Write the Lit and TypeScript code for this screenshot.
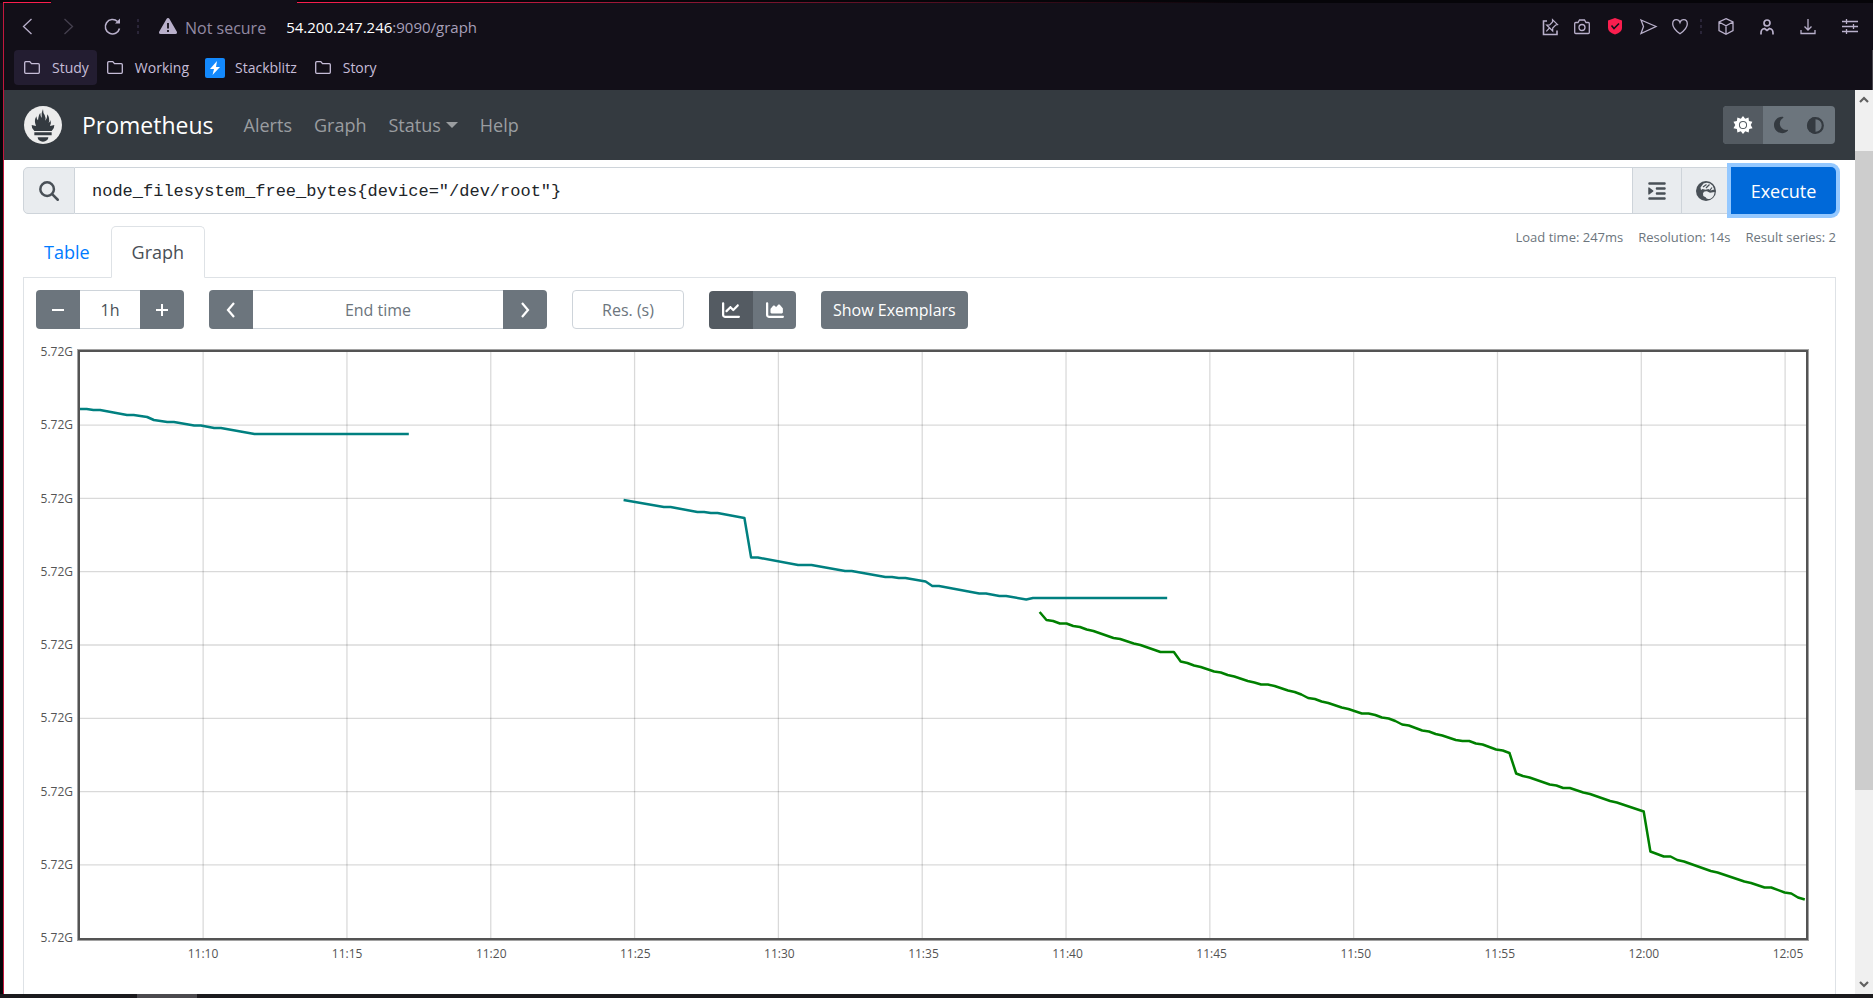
import { LitElement, html, css, svg } from "lit";
import { customElement, property, state } from "lit/decorators.js";

type Point = [number, number];

interface Series {
  color: string;
  points: Point[];
}

const PLOT_WIDTH = 1727;
const PLOT_HEIGHT = 586;
const SAMPLE_STEP = 6.715;

// Each point is [sample index, distance below the top of the plot].
const SERIES: Series[] = [
  {
    color: "#008080",
    points: [
      [0, 57], [1, 57], [2, 58], [3, 58], [7, 63], [8, 63], [10, 65], [11, 68], [13, 70], [14, 70],
      [17, 73.5], [18, 73.5], [20, 76], [21, 76], [26, 82], [49, 82],
    ],
  },
  {
    color: "#008080",
    points: [
      [81, 148], [87, 155], [88, 155], [92, 160], [93, 160], [94, 161], [95, 161], [99, 166],
      [100, 205.5], [101, 205.5], [107, 213], [109, 213], [114, 219], [115, 219], [120, 225],
      [121, 225], [122, 226], [123, 226], [126, 229.5], [127, 234], [128, 234], [134, 241.5],
      [135, 241.5], [137, 244], [138, 244], [141, 247.5], [142, 246], [162, 246],
    ],
  },
  {
    color: "#008000",
    points: [
      [143, 260], [144, 268], [145, 269], [146, 271.5], [147, 271.5], [148, 274], [149, 275],
      [150, 277.5], [151, 279], [154, 286], [155, 287], [157, 291.5], [158, 293], [161, 300],
      [163, 300], [164, 309.5], [165, 311], [166, 313.5], [167, 315], [169, 319.5], [170, 320.5],
      [171, 323], [172, 324.5], [174, 329], [175, 330.5], [176, 332.5], [177, 332.5], [178, 334],
      [180, 338.5], [181, 340], [182, 342.5], [183, 346], [184, 347], [185, 349.5], [186, 351],
      [188, 355.5], [189, 357], [191, 361.5], [192, 361.5], [193, 363], [194, 365.5], [195, 366.5],
      [196, 369], [197, 372.5], [198, 373.5], [200, 378.5], [201, 379.5], [202, 382], [203, 383.5],
      [205, 388], [206, 389], [207, 389], [208, 391.5], [209, 392.5], [211, 397.5], [212, 398.5],
      [213, 401], [214, 421.5], [215, 424], [216, 425.5], [219, 432.5], [220, 433.5], [221, 436],
      [222, 436], [224, 440.5], [225, 442], [228, 449], [229, 450.5], [233, 459.5], [234, 499.5],
      [236, 504.5], [237, 504.5], [238, 508], [239, 509.5], [243, 519], [244, 520.5], [248, 529.5],
      [249, 531], [251, 535.5], [252, 535.5], [254, 540.5], [255, 541.5], [256, 545.5], [257, 547.5],
    ],
  },
];

const Y_LABELS = Array.from({ length: 9 }, () => "5.72G");
const X_LABELS = [
  "11:10", "11:15", "11:20", "11:25", "11:30", "11:35",
  "11:40", "11:45", "11:50", "11:55", "12:00", "12:05",
];

const ICONS = {
  back: svg`<path d="M9.500 1 1.500 8.500 9.500 16" />`,
  forward: svg`<path d="M1.500 1 9.500 8.500 1.500 16" />`,
  reload: svg`<path d="M15.500 10.500A7.200 7.200 0 1 1 13.500 3.500" /><path d="M11 5.500H16V.5z" fill="currentColor" stroke="none" />`,
  folder: svg`<path d="M.7 1.700v9.600q0 1 1 1h12.600q1 0 1-1V3.700q0-1-1-1H7.500L5.800.7H1.700q-1 0-1 1z" />`,
  pinTab: svg`<path d="M5 2H1.500v13.500H15V11.500" stroke-width="1.600" /><path d="m10.500.7 5 5-1.800.3-3 3v3L4.700 6h3l2.800-3zM7.500 9 4.300 12.300" stroke-width="1.200" />`,
  camera: svg`<path d="M1.700 3.500H4L5.500 1h5L12 3.500h2.300q1 0 1 1v9q0 1-1 1H1.700q-1 0-1-1v-9q0-1 1-1z" /><circle cx="8" cy="8.500" r="3" />`,
  shield: svg`<path d="M7 0 14 2.500V10q0 4-7 6.500Q0 14 0 10V2.500z" fill="#fa1e4e" stroke="none" /><path d="m3.500 7.500 2.500 3 5-5" stroke="#14101a" stroke-width="1.600" />`,
  send: svg`<path d="M1 1 16 7.500 1 14.500 3.500 7.500z" />`,
  heart: svg`<path d="M8 14.800Q.7 9.500.7 5 .7.700 4.300.700 7 .7 8 3.500 9 .7 11.700.700 15.300.700 15.300 5 15.300 9.500 8 14.800z" />`,
  cube: svg`<path d="M8 .7 15 4v8.500L8 16.300 1 12.500V4zM1 4l7 3.700L15 4M8 7.700v8.600" />`,
  person: svg`<circle cx="7" cy="4" r="3" stroke-width="1.700" /><path d="M1 15.500V14q0-4 3.500-4.500L7 11.500l2.500-2Q13 10 13 14v1.500" stroke-width="1.700" />`,
  download: svg`<path d="M8 0v11M4.500 7.500 8 11l3.500-3.500M1 11v3.500h14V11" />`,
  sliders: svg`<path d="M0 2.500h16M0 7.500h16M0 12.500h16M4.500 0v5M11.500 5v5M4.500 10v5" />`,
  warning: svg`<path d="M9 0q1 0 1.500 1L18 14q.5 2-1.500 2h-15Q-.5 16 0 14L7.500 1Q8 0 9 0z" fill="currentColor" stroke="none" /><path d="M9 5v5.500M9 12v2" stroke="#14101a" stroke-width="1.800" />`,
  bolt: svg`<rect width="20" height="20" rx="2" fill="#1389fd" stroke="none" /><path d="m12 3-7 8h4l-1.500 6L15 9h-4z" fill="#fff" stroke="none" />`,
  logo: svg`<circle cx="57" cy="57" r="57" fill="#ececec" stroke="none" /><path d="M57 107c-9 0-16-6-16-13h32c0 7-7 13-16 13zM31 88v-9h52v9zM31 75q-9-8-8-18l13 3Q29 45 37 31q1 9 5 12 2-18 7-22 0 10 4 15-2-16 4-27 0 12 5 18 4 8 2 17 6-7 6-19 9 12 4 26 5-4 5-9 4 9-1 18l13-3q1 9-8 18z" fill="#343a40" stroke="none" />`,
  sun: svg`<path d="m12 2 2.400 3 3.700-1.300.4 3.900 3.800.7L20.500 12l2 3.500-3.700.8-.6 4-3.700-1.500L12 22l-2.400-3-3.800 1.300-.5-3.900-3.800-.8L3.500 12l-2-3.600 3.800-.8.500-3.900L9.600 5z" fill="currentColor" stroke="none" /><circle cx="12" cy="12" r="4.500" fill="#545b62" stroke="none" /><circle cx="12" cy="12" r="3.400" fill="currentColor" stroke="none" />`,
  moon: svg`<path d="M223.500 32C100 32 0 132.300 0 256S100 480 223.500 480c60.600 0 115.500-24.200 155.800-63.400c5-4.900 6.300-12.500 3.100-18.700s-10.100-9.700-17-8.500c-9.800 1.700-19.800 2.600-30.100 2.600c-96.900 0-175.500-78.800-175.500-176c0-65.800 36-123.100 89.300-153.300c6.100-3.500 9.200-10.500 7.700-17.300s-7.300-11.900-14.300-12.500c-6.300-.5-12.600-.8-19-.8z" fill="currentColor" stroke="none" />`,
  half: svg`<circle cx="8.500" cy="8.500" r="7.300" stroke-width="2.200" /><path d="M8.500 0a8.500 8.500 0 0 0 0 17z" fill="currentColor" stroke="none" />`,
  search: svg`<circle cx="208" cy="208" r="174" stroke-width="64" /><path d="m343 343 137 137" stroke-width="64" stroke-linecap="round" />`,
  indent: svg`<path d="M0 64C0 46.300 14.300 32 32 32H416c17.700 0 32 14.300 32 32s-14.300 32-32 32H32C14.300 96 0 81.700 0 64zM192 192c0-17.700 14.300-32 32-32H416c17.700 0 32 14.300 32 32s-14.300 32-32 32H224c-17.700 0-32-14.300-32-32zm32 96H416c17.700 0 32 14.300 32 32s-14.300 32-32 32H224c-17.700 0-32-14.300-32-32s14.300-32 32-32zM0 448c0-17.700 14.300-32 32-32H416c17.700 0 32 14.300 32 32s-14.300 32-32 32H32c-17.700 0-32-14.300-32-32zM127.800 268.600L25.800 347.900C15.300 356.100 0 348.600 0 335.300V176.700c0-13.300 15.300-20.800 25.800-12.600l101.900 79.300c8.200 6.400 8.200 18.800 0 25.200z" fill="currentColor" stroke="none" />`,
  globe: svg`<circle cx="10" cy="10" r="10" fill="currentColor" stroke="none" /><path d="M7.500 2.500Q13 .5 16.500 4.500L18.300 8.500 14.500 9.500 12.500 8 9.500 8.800 6.500 8 5 9 4.500 6.500zM7 12.500Q7.500 9.800 11 10.300L14 11.800 18.500 11Q18.500 15.500 14.500 17.700 10.500 19 9.700 16.300L7.300 15z" fill="#e9ecef" stroke="none" /><path d="M7 6 10.500 3.500M10 7l3.500-3.500M13 10.500 16 6.500" stroke-width="1.200" />`,
  minus: svg`<path d="M1 7h12" />`,
  plus: svg`<path d="M1 7h12M7 1v12" />`,
  left: svg`<path d="M8 1 2 8l6 7" />`,
  right: svg`<path d="m2 1 6 7-6 7" />`,
  line: svg`<path d="M64 64c0-17.700-14.300-32-32-32S0 46.300 0 64V400c0 44.200 35.800 80 80 80H480c17.700 0 32-14.300 32-32s-14.300-32-32-32H80c-8.800 0-16-7.200-16-16V64zm406.600 86.600c12.500-12.500 12.500-32.800 0-45.300s-32.800-12.500-45.300 0L320 210.700l-57.400-57.400c-12.500-12.500-32.800-12.500-45.300 0l-112 112c-12.500 12.500-12.500 32.800 0 45.300s32.800 12.500 45.300 0L240 221.300l57.400 57.400c12.500 12.500 32.800 12.500 45.300 0l128-128z" fill="currentColor" stroke="none" />`,
  area: svg`<path d="M64 64c0-17.700-14.300-32-32-32S0 46.300 0 64V400c0 44.200 35.800 80 80 80H480c17.700 0 32-14.300 32-32s-14.300-32-32-32H80c-8.800 0-16-7.200-16-16V64zM128 320V236c0-7.600 2.700-15 7.700-20.800l65.800-76.800c12.100-14.200 33.700-15 46.900-1.800l21 21c10 10 26.400 9.200 35.400-1.600l39.200-47c12.600-15.100 35.700-15.400 48.700-.6L472.100 199c5.100 5.800 7.900 13.300 7.900 21.100V320c0 17.700-14.300 32-32 32H160c-17.700 0-32-14.300-32-32z" fill="currentColor" stroke="none" />`,
  up: svg`<path d="m1 6 4-4 4 4" />`,
  down: svg`<path d="m1 1 4 4 4-4" />`,
};

type IconName = keyof typeof ICONS;

const icon = (name: IconName, width: number, height: number, box = `0 0 ${width} ${height}`, stroke = 1.3) => html`
  <svg width=${width} height=${height} viewBox=${box} fill="none" stroke="currentColor"
    stroke-width=${stroke} aria-hidden="true">${ICONS[name]}</svg>
`;

const shared = css`
  * {
    box-sizing: border-box;
  }
  svg {
    display: block;
    flex: none;
    overflow: visible;
  }
  button,
  input {
    font: inherit;
    margin: 0;
    border-radius: 0;
    min-width: 0;
  }
  button {
    display: flex;
    align-items: center;
    justify-content: center;
    border: 0;
    padding: 0;
    background: none;
    color: inherit;
  }
  a {
    color: inherit;
    text-decoration: none;
  }
`;

@customElement("browser-chrome")
class BrowserChrome extends LitElement {
  static styles = [
    shared,
    css`
      :host {
        display: block;
        background: #120f18;
        color: #b9b0cb;
      }
      .edge {
        display: flex;
        height: 3px;
        background: #060509;
      }
      .edge-start {
        width: 48px;
        border-top: 1px solid #fa1e4e;
        margin: 2px 0 0 3px;
      }
      .active-tab {
        width: 246px;
        background: #120f18;
      }
      .edge-end {
        flex: 1;
        height: 1px;
        margin-top: 2px;
        background: linear-gradient(90deg, #fa1e4e, #8a1633 25%, #060509 60%);
      }
      .body {
        margin-left: 3px;
        border-left: 1px solid #c2183d;
      }
      .address {
        display: flex;
        align-items: center;
        height: 47px;
        padding: 0 15px 0 18px;
        font-size: 16px;
      }
      .nav {
        display: flex;
        align-items: center;
        gap: 30px;
      }
      .dim {
        opacity: 0.3;
      }
      .dots {
        display: grid;
        gap: 3px;
      }
      .dots i {
        width: 2px;
        height: 3px;
        background: #2a2538;
      }
      .nav .dots {
        margin-left: -14px;
      }
      .security {
        display: flex;
        align-items: center;
        gap: 8px;
        margin-left: 20px;
        padding-top: 2px;
        color: #928aa3;
        font-size: 16px;
      }
      .security svg {
        color: #b9b0cb;
        margin-top: -3px;
      }
      .url {
        flex: 1;
        margin-left: 20px;
        padding: 0;
        color: #a79fb8;
        font-size: 15px;
      }
      .host {
        color: #fff;
      }
      .tools {
        display: flex;
        align-items: center;
        gap: 16px;
      }
      .tools .wide {
        margin-left: 10px;
      }
      .tools .dots {
        margin-left: -4px;
      }
      .bookmarks {
        display: flex;
        height: 40px;
        padding: 0 10px;
        border-right: 1px solid #4b4950;
        font-size: 14px;
        color: #c6bdd8;
      }
      .bookmark {
        display: flex;
        align-items: center;
        gap: 12px;
        height: 35px;
        padding: 0 8px 0 10px;
        border-radius: 4px;
      }
      .bookmark.site {
        gap: 10px;
        padding-left: 8px;
      }
      .current {
        background: #231d31;
      }
    `,
  ];

  render() {
    const dots = html`<span class="dots"><i></i><i></i><i></i></span>`;
    return html`
      <div class="edge">
        <div class="edge-start"></div>
        <div class="active-tab"></div>
        <div class="edge-end"></div>
      </div>
      <div class="body">
        <div class="address">
          <div class="nav">
            <button aria-label="Back">${icon("back", 11, 17)}</button>
            <button class="dim" aria-label="Forward">${icon("forward", 11, 17)}</button>
            <button aria-label="Reload">${icon("reload", 17, 17, "0 0 17 17", 1.6)}</button>
            ${dots}
          </div>
          <div class="security">${icon("warning", 18, 16)}<span>Not secure</span></div>
          <div class="url"><span class="host">54.200.247.246</span>:9090/graph</div>
          <div class="tools">
            <button aria-label="Pin">${icon("pinTab", 16, 16)}</button>
            <button aria-label="Snapshot">${icon("camera", 16, 15)}</button>
            <button aria-label="Tracker blocking">${icon("shield", 18, 17, "-2 0 18 17")}</button>
            <button aria-label="Send">${icon("send", 16, 15)}</button>
            <button aria-label="Favourite">${icon("heart", 16, 16)}</button>
            ${dots}
            <button aria-label="Extensions">${icon("cube", 16, 17)}</button>
            <button class="wide" aria-label="Profile">${icon("person", 14, 16)}</button>
            <button class="wide" aria-label="Downloads">${icon("download", 16, 15)}</button>
            <button class="wide" aria-label="Settings">${icon("sliders", 16, 15)}</button>
          </div>
        </div>
        <nav class="bookmarks">
          <a class="bookmark current" href="#">${icon("folder", 16, 13)}Study</a>
          <a class="bookmark" href="#">${icon("folder", 16, 13)}Working</a>
          <a class="bookmark site" href="#">${icon("bolt", 20, 20)}Stackblitz</a>
          <a class="bookmark" href="#">${icon("folder", 16, 13)}Story</a>
        </nav>
      </div>
    `;
  }
}

@customElement("prometheus-navbar")
class PrometheusNavbar extends LitElement {
  static styles = [
    shared,
    css`
      :host {
        display: flex;
        align-items: center;
        height: 70px;
        padding: 0 20px;
        background: #343a40;
        color: #9a9da0;
        font-size: 18px;
      }
      .brand {
        display: flex;
        align-items: center;
        gap: 20px;
        color: #fff;
        font-size: 23px;
      }
      .links {
        display: flex;
        flex: 1;
        gap: 22px;
        margin-left: 30px;
      }
      .menu {
        display: flex;
        align-items: center;
        gap: 5px;
      }
      .caret {
        border: 6px solid transparent;
        border-top-color: currentColor;
        border-bottom: 0;
      }
      .themes {
        display: flex;
        overflow: hidden;
        padding-right: 2px;
        border-radius: 4px;
        background: #6c757d;
        color: #343a40;
      }
      .themes button {
        width: 35px;
        height: 38px;
      }
      .themes .on {
        width: 40px;
        background: #545b62;
        color: #fff;
      }
    `,
  ];

  render() {
    return html`
      <a class="brand" href="#">${icon("logo", 38, 38, "0 0 114 114")}<span>Prometheus</span></a>
      <nav class="links">
        <a href="#">Alerts</a>
        <a href="#">Graph</a>
        <button class="menu">Status<span class="caret"></span></button>
        <a href="#">Help</a>
      </nav>
      <div class="themes">
        <button class="on" aria-label="Light theme">${icon("sun", 20, 20, "1 1 22 22")}</button>
        <button aria-label="Dark theme">${icon("moon", 14, 18, "0 20 384 472")}</button>
        <button aria-label="Automatic theme">${icon("half", 17, 17)}</button>
      </div>
    `;
  }
}

@customElement("time-chart")
class TimeChart extends LitElement {
  @property({ attribute: false }) series: Series[] = [];

  static styles = [
    shared,
    css`
      :host {
        display: grid;
        grid-template-columns: 37px 1fr;
        column-gap: 5px;
        color: #545454;
        font-size: 12px;
        line-height: 16px;
      }
      .y-axis {
        display: flex;
        flex-direction: column;
        justify-content: space-between;
        align-items: flex-end;
        margin: -6px 0;
      }
      .plot {
        border: 2px solid #545454;
        box-shadow: 0 0 0 1px #a2a2a2;
      }
      .plot svg {
        width: 100%;
        height: 586px;
        overflow: hidden;
      }
      .x-axis {
        grid-column: 2;
        display: grid;
        grid-template-columns: repeat(12, 1fr);
        margin: 6px -52px 0 53px;
        text-align: center;
      }
    `,
  ];

  render() {
    const path = (points: Point[]) =>
      "M" + points.map(([sample, y]) => `${(sample * SAMPLE_STEP).toFixed(1)} ${y}`).join("L");
    return html`
      <div class="y-axis">${Y_LABELS.map((label) => html`<span>${label}</span>`)}</div>
      <div class="plot">
        <svg viewBox="0 0 ${PLOT_WIDTH} ${PLOT_HEIGHT}" preserveAspectRatio="none" fill="none"
          role="img" aria-label="Free filesystem bytes over time">
          ${X_LABELS.map((_, i) => svg`<path d="M${123.2 + i * 143.9} 0V${PLOT_HEIGHT}"
            stroke="#000" stroke-opacity="0.15" stroke-width="1.300" vector-effect="non-scaling-stroke" />`)}
          ${Y_LABELS.slice(2).map((_, i) => svg`<path d="M0 ${73.1 + i * 73.3}H${PLOT_WIDTH}"
            stroke="#000" stroke-opacity="0.15" stroke-width="1.300" vector-effect="non-scaling-stroke" />`)}
          ${this.series.map((line) => svg`<path d=${path(line.points)} stroke=${line.color}
            stroke-width="2.500" stroke-linejoin="round" vector-effect="non-scaling-stroke" />`)}
        </svg>
      </div>
      <div class="x-axis">${X_LABELS.map((label) => html`<span>${label}</span>`)}</div>
    `;
  }
}

@customElement("graph-panel")
class GraphPanel extends LitElement {
  @state() private stacked = false;

  static styles = [
    shared,
    css`
      :host {
        display: block;
        padding: 7px 19px 0;
        color: #495057;
        font-size: 16px;
      }
      .query {
        display: flex;
        height: 47px;
      }
      .addon {
        width: 52px;
        border: 1px solid #ced4da;
        border-radius: 5px 0 0 5px;
        background: #e9ecef;
        display: flex;
        align-items: center;
        justify-content: center;
      }
      .expression {
        flex: 1;
        border: 1px solid #ced4da;
        border-width: 1px 0;
        padding: 2px 17px 0;
        color: #212529;
        font-family: "Liberation Mono", monospace;
        font-size: 17px;
      }
      .tool {
        width: 49px;
        border: 1px solid #ced4da;
        border-right: 0;
        background: #e9ecef;
      }
      .execute {
        width: 105px;
        margin-left: 1px;
        border-radius: 0 5px 5px 0;
        background: #0069d9;
        box-shadow: 0 0 0 4px #94c8ff;
        color: #fff;
        font-size: 18px;
      }
      .header {
        display: flex;
        justify-content: space-between;
        margin-top: 12px;
      }
      .tabs {
        display: flex;
        margin-bottom: -1px;
        font-size: 18px;
      }
      .tab {
        height: 52px;
        padding: 0 20px;
        border: 1px solid transparent;
        color: #007bff;
      }
      .tab.active {
        border-color: #dee2e6 #dee2e6 #fff;
        border-radius: 5px 5px 0 0;
        background: #fff;
        color: #495057;
      }
      .stats {
        display: flex;
        gap: 15px;
        color: #6c757d;
        font-size: 13px;
        line-height: 22px;
      }
      .pane {
        min-height: 100vh;
        padding: 12px 27px 0 12px;
        border: 1px solid #dee2e6;
      }
      .controls {
        display: flex;
        height: 39px;
        margin-bottom: 21px;
      }
      .group {
        display: flex;
        margin-right: 25px;
      }
      .group button,
      .exemplars {
        background: #6c757d;
        color: #fff;
      }
      .step {
        width: 44px;
      }
      .group button:first-child {
        border-radius: 4px 0 0 4px;
      }
      .group button:last-child {
        border-radius: 0 4px 4px 0;
      }
      .controls input {
        border: 1px solid #ced4da;
        background: #fff;
        text-align: center;
        color: #495057;
        outline: 0;
      }
      .controls input::placeholder {
        color: #6c757d;
        opacity: 1;
      }
      .controls .group input {
        border-width: 1px 0;
      }
      .range {
        width: 60px;
      }
      .end {
        width: 250px;
      }
      .controls .resolution {
        width: 112px;
        margin-right: 25px;
        border-radius: 4px;
      }
      .modes,
      .exemplars {
        margin-top: 1px;
      }
      .modes button {
        width: 43px;
      }
      .modes .on {
        width: 44px;
        background: #545b62;
      }
      .exemplars {
        padding: 0 12px;
        border-radius: 4px;
      }
    `,
  ];

  render() {
    return html`
      <div class="query">
        <label class="addon" for="expression" aria-label="Expression">${icon("search", 20, 20, "0 0 512 512")}</label>
        <input id="expression" class="expression" .value=${'node_filesystem_free_bytes{device="/dev/root"}'} />
        <button class="tool" aria-label="Format expression">${icon("indent", 18, 20, "0 0 448 512")}</button>
        <button class="tool" aria-label="Open metrics explorer">${icon("globe", 20, 20)}</button>
        <button class="execute">Execute</button>
      </div>
      <div class="header">
        <div class="tabs">
          <button class="tab">Table</button>
          <button class="tab active">Graph</button>
        </div>
        <div class="stats">
          <span>Load time: 247ms</span><span>Resolution: 14s</span><span>Result series: 2</span>
        </div>
      </div>
      <div class="pane">
        <div class="controls">
          <div class="group">
            <button class="step" aria-label="Decrease range">${icon("minus", 14, 14, "0 0 14 14", 2)}</button>
            <input class="range" aria-label="Range" .value=${"1h"} />
            <button class="step" aria-label="Increase range">${icon("plus", 14, 14, "0 0 14 14", 2)}</button>
          </div>
          <div class="group">
            <button class="step" aria-label="Earlier">${icon("left", 10, 16, "0 0 10 16", 2.2)}</button>
            <input class="end" aria-label="End time" placeholder="End time" />
            <button class="step" aria-label="Later">${icon("right", 10, 16, "0 0 10 16", 2.2)}</button>
          </div>
          <input class="resolution" aria-label="Resolution in seconds" placeholder="Res. (s)" />
          <div class="group modes">
            <button class=${this.stacked ? "" : "on"} aria-label="Unstacked graph"
              @click=${() => (this.stacked = false)}>${icon("line", 18, 18, "0 0 512 512")}</button>
            <button class=${this.stacked ? "on" : ""} aria-label="Stacked graph"
              @click=${() => (this.stacked = true)}>${icon("area", 18, 18, "0 0 512 512")}</button>
          </div>
          <button class="exemplars">Show Exemplars</button>
        </div>
        <time-chart .series=${SERIES}></time-chart>
      </div>
    `;
  }
}

@customElement("app-root")
class AppRoot extends LitElement {
  static styles = [
    shared,
    css`
      :host {
        display: flex;
        flex-direction: column;
        height: 100vh;
        overflow: hidden;
        background: #060509;
        font-family: "Open Sans", sans-serif;
      }
      .window {
        display: flex;
        flex-direction: column;
        flex: 1;
        min-height: 0;
      }
      .frame {
        display: flex;
        flex: 1;
        min-height: 0;
        margin-left: 3px;
        border-left: 1px solid #c2183d;
      }
      .page {
        flex: 1;
        min-width: 0;
        overflow: hidden;
        background: #fff;
      }
      .scrollbar {
        display: flex;
        flex-direction: column;
        align-items: center;
        width: 18px;
        padding: 6px 0;
        background: #f0f0f0;
        color: #606060;
      }
      .track {
        flex: 1;
        width: 100%;
        padding-top: 48px;
      }
      .thumb {
        height: 77%;
        background: #cdcdcd;
      }
      .taskbar {
        height: 4px;
        padding-left: 137px;
        background: #1b1a1d;
      }
      .task {
        width: 60px;
        height: 100%;
        background: #4b494d;
      }
    `,
  ];

  render() {
    return html`
      <div class="window">
        <browser-chrome></browser-chrome>
        <div class="frame">
          <main class="page">
            <prometheus-navbar></prometheus-navbar>
            <graph-panel></graph-panel>
          </main>
          <div class="scrollbar">
            ${icon("up", 10, 7, "0 0 10 7", 2.2)}
            <div class="track"><div class="thumb"></div></div>
            ${icon("down", 10, 7, "0 0 10 7", 2.2)}
          </div>
        </div>
      </div>
      <div class="taskbar"><div class="task"></div></div>
    `;
  }
}
